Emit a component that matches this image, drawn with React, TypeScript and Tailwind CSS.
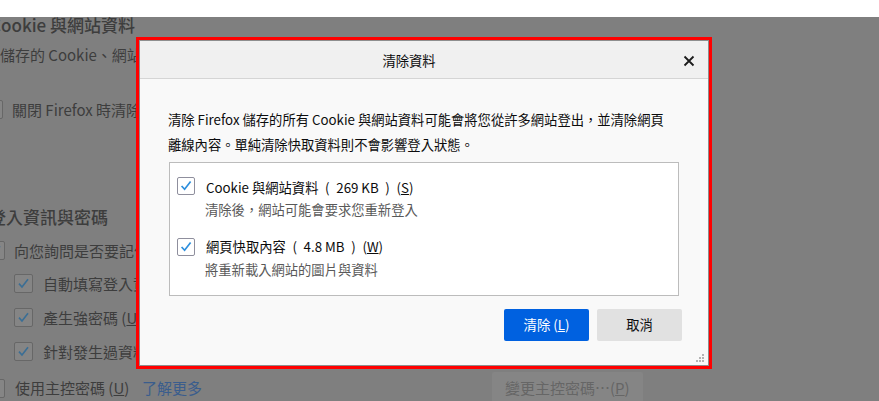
import React from 'react';

const BgCheck: React.FC<{ checked?: boolean; className?: string }> = ({ checked = true, className = '' }) => (
  <div
    className={`flex h-[19px] w-[19px] shrink-0 items-center justify-center rounded-[2px] border border-[#676767] bg-[#858585] ${className}`}
  >
    {checked && (
      <svg width="17" height="17" viewBox="0 0 17 17" fill="none">
        <path d="M4 8.6 L7 12 L13 4.2" stroke="#3a6e95" strokeWidth="1.6" />
      </svg>
    )}
  </div>
);

const DialogCheck: React.FC = () => (
  <div className="flex h-[18px] w-[18px] shrink-0 items-center justify-center rounded-[2px] border border-[#8f8f9d] bg-white">
    <svg width="16" height="16" viewBox="0 0 16 16" fill="none">
      <path d="M3.6 8 L6.6 11.3 L12.6 3.6" stroke="#2d8fdd" strokeWidth="1.7" />
    </svg>
  </div>
);

const App: React.FC = () => {
  return (
    <div className="relative h-[401px] w-[879px] overflow-hidden bg-white font-['Noto_Sans_CJK_TC','Noto_Sans',sans-serif]">
      <div className="h-[17px] bg-white" />
      {/* dimmed preferences page */}
      <div className="h-[384px] overflow-hidden whitespace-nowrap bg-[#7f7f7f] text-[#3d3d3d]">
        <div className="-ml-[10px] text-[17px] font-medium leading-[16px]">Cookie 與網站資料</div>
        <div className="mt-[12px] text-[15px] leading-[20px]">儲存的 Cookie、網站資料與快取目前使用了 269 KB 的磁碟空間。</div>
        <div className="mt-[35px] flex h-[19px] items-center">
          <BgCheck checked={false} className="-ml-[16px]" />
          <span className="ml-[9px] text-[15px] leading-[20px]">關閉 Firefox 時清除 Cookie 與網站資料</span>
        </div>
        <div className="-ml-[11px] mt-[90px] text-[17px] font-medium leading-[16px]">登入資訊與密碼</div>
        <div className="mt-[16px] flex h-[19px] items-center">
          <BgCheck className="-ml-[14px]" />
          <span className="ml-[9px] text-[15px] leading-[20px]">向您詢問是否要記住網站的登入資訊與密碼</span>
        </div>
        <div className="mt-[14px] flex h-[19px] items-center pl-[14px]">
          <BgCheck />
          <span className="ml-[10px] text-[15px] leading-[20px]">自動填寫登入資訊與密碼</span>
        </div>
        <div className="mt-[15px] flex h-[19px] items-center pl-[14px]">
          <BgCheck />
          <span className="ml-[10px] text-[15px] leading-[20px]">
            產生強密碼 (<span className="underline">U</span>)
          </span>
        </div>
        <div className="mt-[15px] flex h-[19px] items-center pl-[14px]">
          <BgCheck />
          <span className="ml-[10px] text-[15px] leading-[20px]">針對發生過資料外洩的網站顯示密碼警告</span>
        </div>
        <div className="mt-[11px] flex h-[32px] items-center">
          <BgCheck checked={false} className="-ml-[14px]" />
          <span className="ml-[10px] w-[127px] text-[15px] leading-[20px]">
            使用主控密碼 (<span className="underline">U</span>)
          </span>
          <span className="text-[15px] leading-[20px] text-[#3a5d8d]">了解更多</span>
          <div className="ml-[290px] flex h-[32px] items-center rounded-[2px] bg-[#858585] px-[13px] text-[15px] text-[#666666]">
            變更主控密碼…(<span className="underline">P</span>)
          </div>
        </div>
      </div>

      {/* dialog, outlined in red */}
      <div className="absolute left-[136px] top-[37px] h-[332px] w-[576px] border-[3px] border-[#ff0000]">
        <div className="relative flex h-full w-full flex-col border border-[#8e8e8e] bg-[#f9f9f9] text-[#0c0c0d]">
          <div className="relative flex h-[38px] shrink-0 items-center border-b border-[#d5d5d5] bg-[#f0f0f0] pr-[30px] pt-[2px]">
            <div className="flex-1 text-center text-[13.3px] leading-[20px]">清除資料</div>
            <svg
              className="absolute right-[13px] top-[14px]"
              width="12"
              height="12"
              viewBox="0 0 12 12"
              fill="none"
            >
              <path d="M1.5 1.5 L10.5 10.5 M10.5 1.5 L1.5 10.5" stroke="#1b1b1b" strokeWidth="1.8" />
            </svg>
          </div>
          <div className="pl-[29px] pr-[29px] pt-[28px]">
            <p className="-ml-px w-[508px] text-[13.3px] leading-[25px]">
              清除 Firefox 儲存的所有 Cookie 與網站資料可能會將您從許多網站登出，並清除網頁離線內容。單純清除快取資料則不會影響登入狀態。
            </p>
            <div className="mt-[5px] border border-[#bcbcbc] bg-white pb-[15px] pl-[7px] pt-[15px]">
              <div className="flex items-start">
                <div className="-mt-px">
                  <DialogCheck />
                </div>
                <div className="ml-[11px]">
                  <div className="text-[13.3px] leading-[20px]">
                    Cookie 與網站資料{'\u2002'}({'\u2002'}269 KB{'\u2002'}){'\u2002'}(<span className="underline">S</span>)
                  </div>
                  <div className="-ml-px mt-[2px] text-[13.3px] leading-[20px] text-[#595959]">
                    清除後，網站可能會要求您重新登入
                  </div>
                </div>
              </div>
              <div className="mt-[17px] flex items-start">
                <div className="mt-px">
                  <DialogCheck />
                </div>
                <div className="ml-[11px]">
                  <div className="text-[13.3px] leading-[20px]">
                    網頁快取內容{'\u2002'}({'\u2002'}4.8 MB{'\u2002'}){'\u2002'}(<span className="underline">W</span>)
                  </div>
                  <div className="-ml-px mt-[3px] text-[13.3px] leading-[20px] text-[#595959]">
                    將重新載入網站的圖片與資料
                  </div>
                </div>
              </div>
            </div>
            <div className="-mr-[3px] mt-[13px] flex justify-end gap-[8px]">
              <button className="flex h-[32px] w-[85px] items-center justify-center rounded-[2px] bg-[#0061e0] text-[13.3px] text-white">
                清除 (<span className="underline">L</span>)
              </button>
              <button className="flex h-[32px] w-[85px] items-center justify-center rounded-[2px] bg-[#e1e1e1] text-[13.3px] text-[#0c0c0d]">
                取消
              </button>
            </div>
          </div>
          <svg className="absolute bottom-[2px] right-[3px]" width="9" height="9" viewBox="0 0 9 9">
            <rect x="6" y="0" width="2" height="2" fill="#b4b4b4" />
            <rect x="3" y="3" width="2" height="2" fill="#b4b4b4" />
            <rect x="6" y="3" width="2" height="2" fill="#b4b4b4" />
            <rect x="0" y="6" width="2" height="2" fill="#b4b4b4" />
            <rect x="3" y="6" width="2" height="2" fill="#b4b4b4" />
            <rect x="6" y="6" width="2" height="2" fill="#b4b4b4" />
          </svg>
        </div>
      </div>
    </div>
  );
};

export default App;
